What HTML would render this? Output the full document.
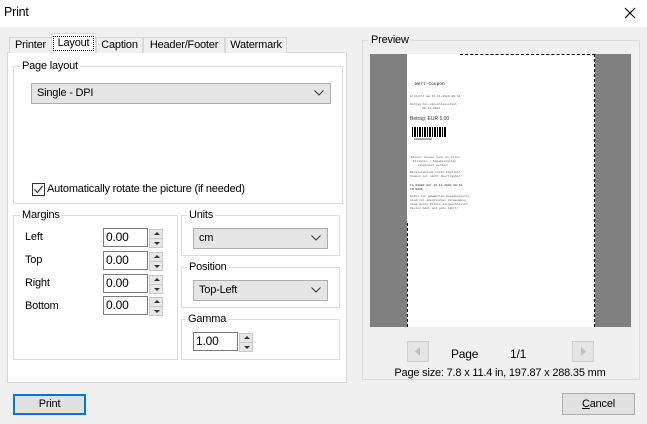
<!DOCTYPE html>
<html><head><style>
*{box-sizing:border-box;margin:0;padding:0}
body{width:647px;height:424px;background:#f0f0f0;font-family:"Liberation Sans",sans-serif;font-size:11px;letter-spacing:-0.2px;color:#000;position:relative;overflow:hidden}
.a{position:absolute}
.grp{position:absolute;border:1px solid #dcdcdc}
.lg{position:absolute;top:-8px;left:6px;background:#f0f0f0;padding:0 2px;line-height:14px}
.panel .lg{background:#fff}
.cmb{position:absolute;background:#e5e5e5;border:1px solid #adadad;line-height:19px;padding-left:5px}
.cmb svg{position:absolute;right:6px;top:6px}
.ed{position:absolute;background:#fff;border:1px solid #7a7a7a;height:19px;width:45px;line-height:17px;padding-left:2px;font-size:12px}
.sp{position:absolute;width:14px;height:19px;border:1px solid #c8c8c8;background:#e8e8e8}
.sp:after{content:"";position:absolute;left:0;right:0;top:8px;border-top:1px solid #c8c8c8}
.up{position:absolute;left:4px;top:2px;border:3px solid transparent;border-bottom:3px solid #333;border-top:0}
.dn{position:absolute;left:4px;bottom:2px;border:3px solid transparent;border-top:3px solid #333;border-bottom:0}
.btn{position:absolute;background:#e1e1e1;border:1px solid #adadad;text-align:center;line-height:19px}
.t{position:absolute;font-size:3px;line-height:3.5px;white-space:nowrap;color:#555;font-family:"Liberation Mono",monospace;letter-spacing:0}
</style></head><body>
<div class="a" style="left:0;top:0;width:647px;height:27px;background:#fff"></div>
<div class="a" style="left:4px;top:5px;font-size:12.5px">Print</div>
<svg class="a" style="left:624px;top:7px" width="12" height="12"><path d="M1 1L11 11M11 1L1 11" stroke="#000" stroke-width="1.2"/></svg>

<div class="a panel" style="left:7px;top:52px;width:340px;height:331px;background:#fff;border:1px solid #d9d9d9"></div>
<div class="a" style="left:9px;top:37px;width:43px;height:16px;border:1px solid #d9d9d9;border-bottom:0;background:#f0f0f0;text-align:center;line-height:15px">Printer</div>
<div class="a" style="left:51px;top:33px;width:45px;height:20px;border:1px solid #d9d9d9;border-bottom:0;background:#fff"></div>
<div class="a" style="left:53px;top:36px;width:41px;height:15px;border:1px dotted #000;text-align:center;line-height:13px">Layout</div>
<div class="a" style="left:96px;top:37px;width:47px;height:16px;border:1px solid #d9d9d9;border-bottom:0;background:#f0f0f0;text-align:center;line-height:15px">Caption</div>
<div class="a" style="left:143px;top:37px;width:82px;height:16px;border:1px solid #d9d9d9;border-bottom:0;background:#f0f0f0;text-align:center;line-height:15px">Header/Footer</div>
<div class="a" style="left:225px;top:37px;width:62px;height:16px;border:1px solid #d9d9d9;border-bottom:0;background:#f0f0f0;text-align:center;line-height:15px">Watermark</div>

<div class="grp panel" style="left:13px;top:66px;width:330px;height:138px;background:#fff"><div class="lg" style="left:6px">Page layout</div></div>
<div class="cmb" style="left:31px;top:83px;width:300px;height:21px">Single - DPI<svg width="10" height="6"><path d="M0.5 0.5L5 5L9.5 0.5" stroke="#333" fill="none"/></svg></div>
<div class="a" style="left:32px;top:183px;width:13px;height:13px;border:1px solid #333;background:#fff"><svg width="11" height="11" style="position:absolute;left:0;top:0"><path d="M1.5 5.5L4.5 8.5L9.5 2" stroke="#333" fill="none" stroke-width="1.2"/></svg></div>
<div class="a" style="left:47px;top:183px">Automatically rotate the picture (if needed)</div>

<div class="grp panel" style="left:13px;top:215px;width:165px;height:145px;background:#fff"><div class="lg">Margins</div></div>
<div class="a" style="left:25px;top:231px">Left</div>
<div class="a" style="left:25px;top:254px">Top</div>
<div class="a" style="left:25px;top:277px">Right</div>
<div class="a" style="left:25px;top:300px">Bottom</div>
<div class="ed" style="left:103px;top:228px">0.00</div><div class="sp" style="left:149px;top:229px"><i class="up"></i><i class="dn"></i></div>
<div class="ed" style="left:103px;top:251px">0.00</div><div class="sp" style="left:149px;top:252px"><i class="up"></i><i class="dn"></i></div>
<div class="ed" style="left:103px;top:274px">0.00</div><div class="sp" style="left:149px;top:275px"><i class="up"></i><i class="dn"></i></div>
<div class="ed" style="left:103px;top:296px">0.00</div><div class="sp" style="left:149px;top:297px"><i class="up"></i><i class="dn"></i></div>

<div class="grp panel" style="left:181px;top:215px;width:159px;height:41px;background:#fff"><div class="lg" style="left:5px">Units</div></div>
<div class="cmb" style="left:193px;top:228px;width:135px;height:21px">cm<svg width="10" height="6"><path d="M0.5 0.5L5 5L9.5 0.5" stroke="#333" fill="none"/></svg></div>
<div class="grp panel" style="left:181px;top:267px;width:159px;height:41px;background:#fff"><div class="lg" style="left:5px">Position</div></div>
<div class="cmb" style="left:193px;top:280px;width:135px;height:21px">Top-Left<svg width="10" height="6"><path d="M0.5 0.5L5 5L9.5 0.5" stroke="#333" fill="none"/></svg></div>
<div class="grp panel" style="left:181px;top:319px;width:159px;height:41px;background:#fff"><div class="lg" style="left:4px">Gamma</div></div>
<div class="ed" style="left:193px;top:332px">1.00</div><div class="sp" style="left:239px;top:333px"><i class="up"></i><i class="dn"></i></div>

<div class="btn" style="left:13px;top:394px;width:73px;height:21px;border:2px solid #0078d7;line-height:17px">Print</div>

<div class="grp" style="left:362px;top:40px;width:278px;height:340px"><div class="lg">Preview</div></div>
<div class="a" style="left:370px;top:54px;width:261px;height:273px;background:#808080"></div>
<div class="a" style="left:407px;top:54px;width:188px;height:273px;background:#fff;border-right:1px dashed #000"></div>
<div class="a" style="left:460px;top:54px;width:135px;border-top:1px dashed #000"></div>
<div class="a" style="left:407px;top:223px;height:104px;border-left:1px dashed #000"></div>
<div class="t" style="left:415px;top:83px;font-size:4.5px;color:#222">Wert-Coupon</div>
<div class="t" style="left:410px;top:95px">Erstellt am 15.11.2020 09:34</div>
<div class="t" style="left:410px;top:103px">Gültig bis einschliesslich</div>
<div class="t" style="left:422px;top:107px">29.11.2020</div>
<div class="a" style="left:410px;top:116px;font-size:5px;color:#333;letter-spacing:0">Betrag: EUR 5,00</div>
<div class="a" style="left:412px;top:127px;width:35px;height:10px;background:repeating-linear-gradient(90deg,#000 0 1px,#fff 1px 2px,#000 2px 4px,#fff 4px 5px)"></div>
<div class="t" style="left:414px;top:138px;color:#000">0000000000</div>
<div class="t" style="left:411px;top:156px">Dieser Coupon kann an allen</div>
<div class="t" style="left:413px;top:160px">Filialen / Abgabestellen</div>
<div class="t" style="left:418px;top:164px">eingelöst werden!</div>
<div class="t" style="left:410px;top:171px">Barauszahlung nicht möglich!</div>
<div class="t" style="left:410px;top:175px">Coupon ist nicht übertragbar!</div>
<div class="t" style="left:410px;top:184px;color:#222">TA 00000 Kdr 15.11.2020 09:34</div>
<div class="t" style="left:410px;top:188px;color:#222">ID 0000</div>
<div class="t" style="left:410px;top:195px">Daten zur gewählten Ausgabestelle</div>
<div class="t" style="left:410px;top:199px">sind zur Identischen Verwendung</div>
<div class="t" style="left:410px;top:203px">lang durch Dritte ausgeschlossen</div>
<div class="t" style="left:410px;top:207px">Vielen Dank und gute Fahrt!</div>

<div class="a" style="left:407px;top:341px;width:22px;height:21px;border:1px solid #cfcfcf;background:#e5e5e5"><svg width="20" height="19"><path d="M12 5L7 9.5L12 14Z" fill="#c0c0c0"/></svg></div>
<div class="a" style="left:451px;top:347px;font-size:12px">Page</div>
<div class="a" style="left:510px;top:347px;font-size:12px">1/1</div>
<div class="a" style="left:572px;top:341px;width:22px;height:21px;border:1px solid #cfcfcf;background:#e5e5e5"><svg width="20" height="19"><path d="M8 5L13 9.5L8 14Z" fill="#c0c0c0"/></svg></div>
<div class="a" style="left:394px;top:367px;width:212px;text-align:center;white-space:nowrap">Page size: 7.8 x 11.4 in, 197.87 x 288.35 mm</div>

<div class="btn" style="left:562px;top:393px;width:73px;height:22px;line-height:20px"><u>C</u>ancel</div>
</body></html>
